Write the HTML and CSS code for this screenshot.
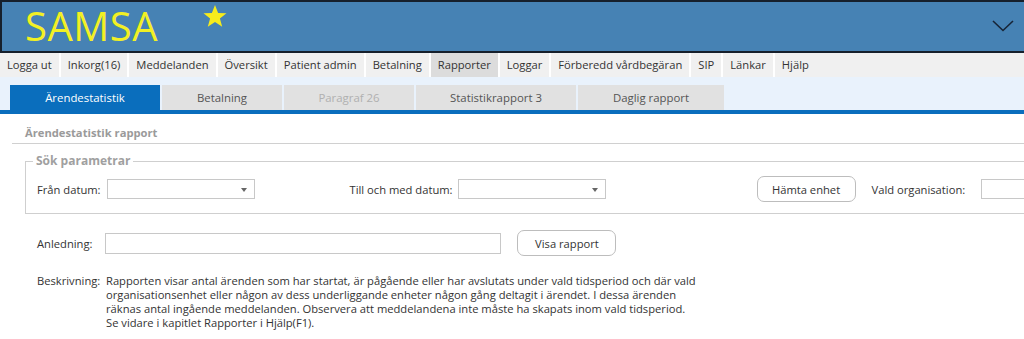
FILE: index.html
```html
<!DOCTYPE html>
<html lang="sv">
<head>
	<meta charset="UTF-8">
	<title>SAMSA - Ärendestatistik</title>
	<link rel="stylesheet" href="styles.css">
</head>
<body>
	<div class="header">
		<span class="logo">SAMSA</span>
		<svg class="star" width="26" height="25" viewBox="0 0 26 25"><polygon points="13,1 16.1,9 24.5,9.3 17.9,14.6 20.2,22.8 13,18 5.8,22.8 8.1,14.6 1.5,9.3 9.9,9" fill="#f6ec1c"/></svg>
		<svg class="chevron" width="22" height="14" viewBox="0 0 22 14"><polyline points="1,2 11,11.5 21,2" fill="none" stroke="#172436" stroke-width="1.6"/></svg>
	</div>
	<ul class="menu">
		<li>Logga ut</li>
		<li>Inkorg(16)</li>
		<li>Meddelanden</li>
		<li>Översikt</li>
		<li>Patient admin</li>
		<li>Betalning</li>
		<li class="active">Rapporter</li>
		<li>Loggar</li>
		<li>Förberedd vårdbegäran</li>
		<li>SIP</li>
		<li>Länkar</li>
		<li>Hjälp</li>
	</ul>
	<div class="tabbar">
		<ul class="tabs">
			<li class="cur t1">Ärendestatistik</li>
			<li class="t2">Betalning</li>
			<li class="t3 disabled">Paragraf 26</li>
			<li class="t4">Statistikrapport 3</li>
			<li class="t5">Daglig rapport</li>
		</ul>
	</div>
	<div class="content">
		<h2 class="title">Ärendestatistik rapport</h2>
		<fieldset class="params">
			<legend>Sök parametrar</legend>
			<div class="row">
				<label>Från datum:</label>
				<div class="select s1"><span class="arrow"></span></div>
				<label class="l2">Till och med datum:</label>
				<div class="select s2"><span class="arrow"></span></div>
				<button class="btn b1">Hämta enhet</button>
				<label class="l3">Vald organisation:</label>
				<div class="org"></div>
			</div>
		</fieldset>
		<div class="row reason">
			<label>Anledning:</label>
			<div class="text-input"></div>
			<button class="btn b2">Visa rapport</button>
		</div>
		<div class="desc">
			<label>Beskrivning:</label>
			<p>Rapporten visar antal ärenden som har startat, är pågående eller har avslutats under vald tidsperiod och där vald<br>organisationsenhet eller någon av dess underliggande enheter någon gång deltagit i ärendet. I dessa ärenden<br>räknas antal ingående meddelanden. Observera att meddelandena inte måste ha skapats inom vald tidsperiod.<br>Se vidare i kapitlet Rapporter i Hjälp(F1).</p>
		</div>
	</div>
</body>
</html>
```
FILE: styles.css
```css
*{margin:0;padding:0;box-sizing:border-box;list-style:none;}
body{width:1024px;height:339px;overflow:hidden;font-family:"Open Sans","Noto Sans",sans-serif;font-size:11.2px;color:#333;background:#fff;}
.header{height:53px;background:#4682b4;border:2px solid #16202c;border-right:none;display:flex;align-items:flex-start;}
.logo{color:#f2f024;font-size:40px;line-height:48px;margin-left:23px;letter-spacing:0.5px;}
.star{margin:2px 0 0 44px;}
.chevron{margin:17px 10px 0 auto;}
.menu{display:flex;height:24px;background:#fff;gap:2px;}
.menu li{background:#f0f0f0;padding:0 7px;line-height:24px;color:#333;white-space:nowrap;font-size:11.2px;}
.menu li.active{background:#dcdcdc;}
.menu li:last-child{flex:1;}
.tabbar{height:37px;background:#e9f2fc;border-bottom:4px solid #0a6ebd;padding:8px 0 0 10px;}
.tabs{display:flex;gap:2px;height:25px;}
.tabs li{background:#e1e1e1;color:#555;line-height:25px;text-align:center;font-size:11.4px;}
.tabs .t1{width:150px;}
.tabs .t2{width:120px;}
.tabs .t3{width:130px;}
.tabs .t4{width:160px;}
.tabs .t5{width:146px;}
.tabs li.cur{background:#0a6ebd;color:#fff;}
.tabs li.disabled{color:#b0b0b0;}
.content{padding:12px 0 0 12px;width:1100px;}
.title{font-size:11.2px;font-weight:bold;color:#9a9a9a;padding:0 0 3px 13px;border-bottom:1px solid #d0d0d0;line-height:14px;}
.params{margin:10px 0 0 13px;border:1px solid #cfcfcf;padding:8px 11px 0;height:60px;}
.params legend{font-size:12px;font-weight:bold;color:#a0a0a0;padding:0 3px;margin-left:-4px;line-height:14px;}
.row{display:flex;align-items:center;}
.row label{white-space:nowrap;}
.select{width:148px;height:20px;border:1px solid #c8c8c8;margin-left:6px;position:relative;flex:none;}
.arrow{position:absolute;right:7px;top:8px;border-left:3px solid transparent;border-right:3px solid transparent;border-top:4px solid #666;}
.l2{margin-left:95px;}
.select.s2{margin-left:5px;}
.btn{font-family:inherit;font-size:11.2px;color:#333;background:#fff;border:1px solid #bdbdbd;border-radius:7px;height:26px;flex:none;}
.b1{width:99px;margin-left:151px;}
.l3{margin-left:16px;}
.org{width:60px;height:20px;border:1px solid #c8c8c8;margin-left:16px;flex:none;}
.reason{margin:16px 0 0 25px;}
.text-input{width:396px;height:21px;border:1px solid #c8c8c8;margin-left:13px;}
.b2{width:99px;margin-left:16px;}
.desc{display:flex;margin:18px 0 0 25px;line-height:14px;}
.desc label{width:69px;}
```
